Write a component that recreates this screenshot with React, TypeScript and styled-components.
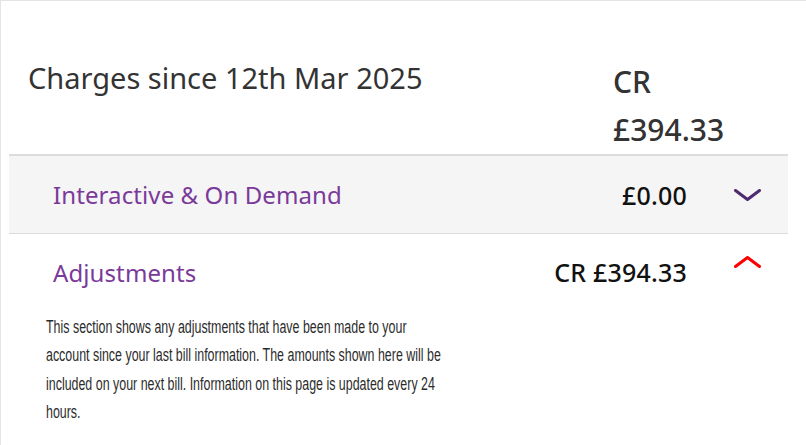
import React from "react";
import styled, { createGlobalStyle } from "styled-components";

const GlobalStyle = createGlobalStyle`
    html, body {
        margin: 0;
        padding: 0;
        background: #ffffff;
    }
`;

const BODY_SCALE = 0.71;

const Page = styled.div`
    min-height: 445px;
    box-sizing: border-box;
    border-left: 1px solid #e4e4e4;
    border-top: 1px solid #e4e4e4;
    font-family: "Noto Sans", Roboto, "Liberation Sans", sans-serif;
    color: #333333;
    overflow: hidden;
`;

const Summary = styled.div`
    display: flex;
    align-items: flex-start;
    padding: 57px 0 0 27px;
`;

const SummaryTitle = styled.h2`
    flex: 1;
    margin: 0;
    font-size: 29px;
    font-weight: 400;
    line-height: 40px;
    color: #333333;
`;

const SummaryAmount = styled.div`
    width: 130px;
    margin-right: 63px;
    font-size: 30px;
    font-weight: 500;
    line-height: 48px;
    color: #333333;
`;

const Sections = styled.div`
    margin: 0 18px 0 8px;
`;

const Section = styled.section<{ $shaded?: boolean }>`
    background: ${(p) => (p.$shaded ? "#f5f5f5" : "#ffffff")};
    border-top: 1px solid #dcdcdc;
    &:first-child {
        border-top: 2px solid #dcdcdc;
    }
`;

const SectionHeader = styled.div<{ $height: number }>`
    display: flex;
    align-items: center;
    height: ${(p) => p.$height}px;
    padding: 0 27px 0 44px;
`;

const SectionTitle = styled.span`
    flex: 1;
    font-size: 24px;
    font-weight: 400;
    letter-spacing: 0.1px;
    color: #7a3a9a;
`;

const SectionAmount = styled.span`
    font-size: 25px;
    font-weight: 500;
    letter-spacing: 0.2px;
    color: #111111;
    margin-right: 47px;
`;

const Chevron = styled.svg<{ $color: string; $up?: boolean }>`
    width: 27px;
    height: 12px;
    display: block;
    stroke: ${(p) => p.$color};
    margin-top: ${(p) => (p.$up ? "-20px" : "0")};
`;

/* the reference body copy is a narrow face, so a regular one is squeezed */
const SectionBody = styled.p`
    margin: 0;
    padding: 3px 0 14px ${37 / BODY_SCALE}px;
    width: 565px;
    font-family: "Liberation Sans", Arial, sans-serif;
    font-size: 17.5px;
    line-height: 28.4px;
    color: #2b2b2b;
    transform: scaleX(${BODY_SCALE});
    transform-origin: left top;
`;

const ChevronIcon: React.FC<{ color: string; up?: boolean }> = ({ color, up }) => (
    <Chevron $color={color} $up={up} viewBox="0 0 27 12" fill="none">
        <path
            d={up ? "M1.5 10.5 L13.5 1.5 L25.5 10.5" : "M1.5 1.5 L13.5 10.5 L25.5 1.5"}
            strokeWidth="3"
            strokeLinecap="round"
            strokeLinejoin="round"
        />
    </Chevron>
);

export default function App() {
    return (
        <>
            <GlobalStyle />
            <Page>
                <Summary>
                    <SummaryTitle>Charges since 12th Mar 2025</SummaryTitle>
                    <SummaryAmount>CR £394.33</SummaryAmount>
                </Summary>
                <Sections>
                    <Section $shaded>
                        <SectionHeader $height={77}>
                            <SectionTitle>Interactive &amp; On Demand</SectionTitle>
                            <SectionAmount>£0.00</SectionAmount>
                            <ChevronIcon color="#4e2a6e" />
                        </SectionHeader>
                    </Section>
                    <Section>
                        <SectionHeader $height={76}>
                            <SectionTitle>Adjustments</SectionTitle>
                            <SectionAmount>CR £394.33</SectionAmount>
                            <ChevronIcon color="#ff0000" up />
                        </SectionHeader>
                        <SectionBody>
                            This section shows any adjustments that have been made to your
                            account since your last bill information. The amounts shown here
                            will be included on your next bill. Information on this page is
                            updated every 24 hours.
                        </SectionBody>
                    </Section>
                </Sections>
            </Page>
        </>
    );
}
